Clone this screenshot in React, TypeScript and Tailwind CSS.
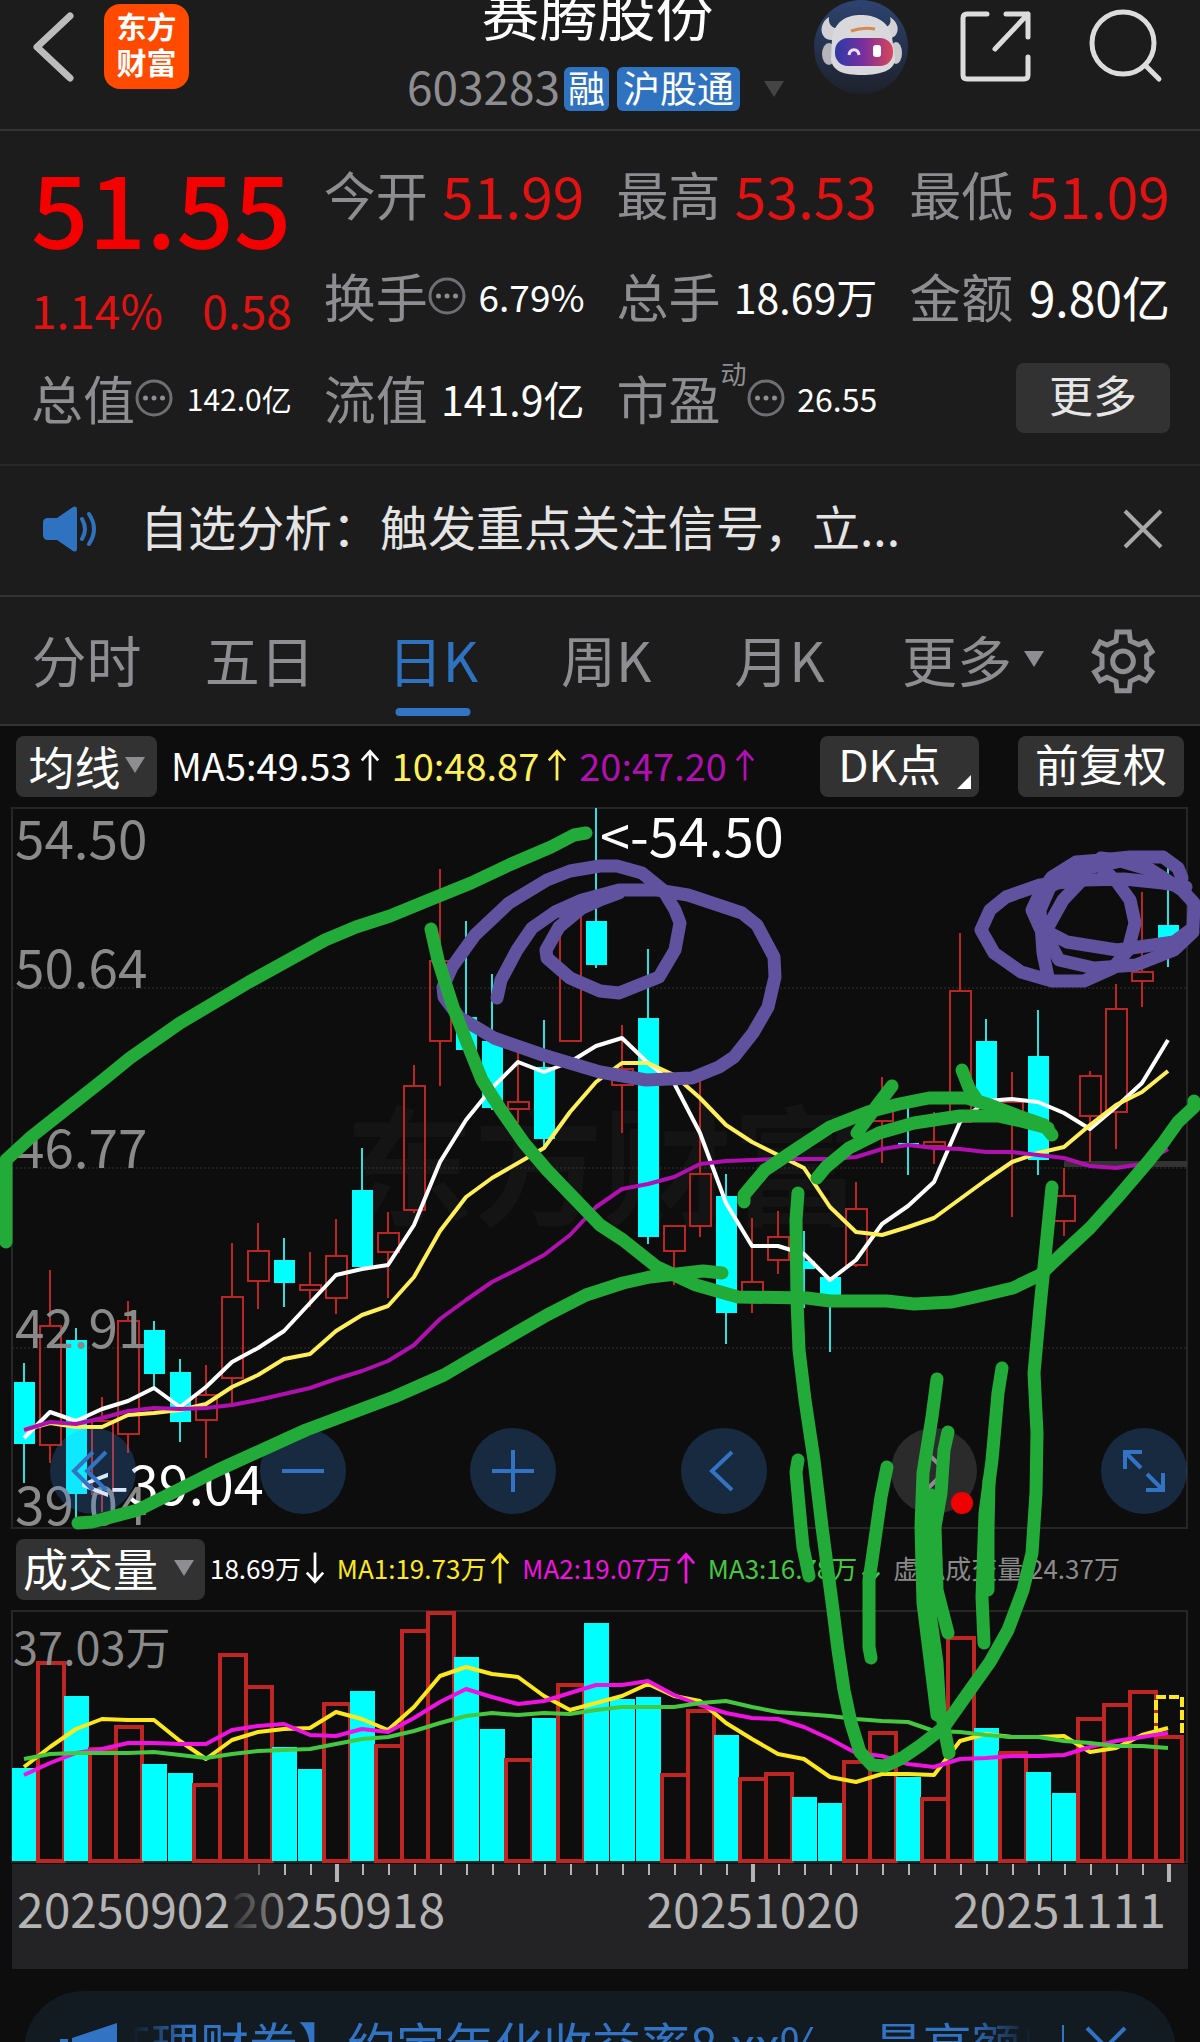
import { useState, type ReactNode } from "react";

// u = up day (hollow red), d = down day (solid cyan); values are chart y positions
type Candle = ["u" | "d", number, number, number, number];

const CANDLES: Candle[] = [
  ["d", 1363, 1382, 1444, 1483],
  ["u", 1270, 1326, 1445, 1463],
  ["d", 1328, 1340, 1494, 1528],
  ["u", 1397, 1421, 1494, 1512],
  ["u", 1301, 1321, 1434, 1453],
  ["d", 1321, 1330, 1374, 1387],
  ["d", 1359, 1372, 1422, 1442],
  ["u", 1365, 1395, 1420, 1458],
  ["u", 1243, 1297, 1378, 1405],
  ["u", 1223, 1251, 1281, 1309],
  ["d", 1238, 1260, 1283, 1307],
  ["u", 1252, 1285, 1290, 1307],
  ["u", 1219, 1256, 1298, 1314],
  ["d", 1148, 1190, 1267, 1267],
  ["u", 1212, 1233, 1252, 1298],
  ["u", 1065, 1086, 1210, 1213],
  ["u", 869, 961, 1041, 1086],
  ["d", 921, 1017, 1050, 1050],
  ["d", 974, 1041, 1108, 1110],
  ["u", 1053, 1102, 1109, 1123],
  ["d", 1020, 1067, 1139, 1147],
  ["u", 917, 917, 1041, 1041],
  ["d", 808, 921, 965, 968],
  ["u", 1025, 1069, 1085, 1133],
  ["d", 949, 1018, 1237, 1244],
  ["u", 1226, 1226, 1251, 1285],
  ["u", 1080, 1174, 1226, 1237],
  ["d", 1174, 1196, 1313, 1344],
  ["u", 1218, 1282, 1293, 1313],
  ["u", 1211, 1237, 1260, 1274],
  ["d", 1231, 1261, 1269, 1308],
  ["d", 1277, 1277, 1300, 1352],
  ["u", 1182, 1209, 1265, 1267],
  ["u", 1077, 1110, 1121, 1163],
  ["d", 1108, 1143, 1147, 1175],
  ["u", 1112, 1142, 1146, 1164],
  ["u", 933, 991, 1122, 1122],
  ["d", 1019, 1041, 1102, 1102],
  ["u", 1072, 1102, 1122, 1217],
  ["d", 1010, 1056, 1160, 1175],
  ["u", 1168, 1196, 1221, 1236],
  ["u", 1071, 1076, 1116, 1162],
  ["u", 984, 1009, 1112, 1149],
  ["u", 892, 972, 981, 1007],
  ["d", 865, 925, 938, 967],
];

const MA5 = [1438, 1412, 1421, 1409, 1401, 1388, 1407, 1387, 1362, 1348, 1331, 1303, 1275, 1269, 1265, 1225, 1162, 1120, 1088, 1062, 1072, 1062, 1046, 1038, 1063, 1083, 1133, 1203, 1246, 1246, 1254, 1280, 1260, 1224, 1206, 1182, 1122, 1101, 1099, 1102, 1113, 1129, 1107, 1083, 1040];
const MA10 = [1430, 1423, 1427, 1427, 1415, 1413, 1410, 1404, 1387, 1375, 1359, 1354, 1331, 1315, 1306, 1277, 1231, 1197, 1178, 1163, 1148, 1112, 1082, 1063, 1063, 1075, 1098, 1125, 1142, 1155, 1168, 1207, 1232, 1235, 1227, 1218, 1199, 1180, 1162, 1153, 1147, 1125, 1105, 1092, 1071];
const MA20 = [1430, 1422, 1424, 1418, 1411, 1408, 1409, 1408, 1405, 1400, 1394, 1388, 1379, 1371, 1361, 1345, 1319, 1300, 1282, 1269, 1255, 1235, 1207, 1189, 1184, 1177, 1164, 1161, 1160, 1159, 1159, 1159, 1157, 1149, 1145, 1148, 1149, 1152, 1152, 1155, 1158, 1166, 1168, 1164, 1149];

const VOLUME_TOPS = [1768, 1662, 1696, 1748, 1726, 1764, 1773, 1784, 1654, 1686, 1747, 1769, 1703, 1691, 1745, 1630, 1612, 1657, 1729, 1759, 1718, 1684, 1623, 1699, 1697, 1774, 1710, 1735, 1778, 1773, 1797, 1803, 1761, 1732, 1777, 1798, 1637, 1728, 1752, 1772, 1793, 1718, 1704, 1691, 1736];
const VOLUME_DOWN = [0, 2, 5, 6, 10, 11, 13, 17, 18, 20, 22, 23, 24, 27, 30, 31, 34, 37, 39, 40];
const VMA1 = [1767, 1747, 1729, 1719, 1720, 1720, 1741, 1759, 1740, 1732, 1729, 1728, 1712, 1719, 1730, 1707, 1676, 1667, 1674, 1677, 1696, 1710, 1703, 1696, 1684, 1696, 1701, 1723, 1739, 1754, 1759, 1777, 1782, 1774, 1774, 1775, 1741, 1734, 1737, 1737, 1736, 1752, 1748, 1735, 1728];
const VMA2 = [1775, 1763, 1753, 1749, 1743, 1743, 1744, 1744, 1730, 1726, 1724, 1735, 1736, 1729, 1732, 1718, 1702, 1689, 1697, 1704, 1701, 1693, 1685, 1685, 1681, 1695, 1705, 1713, 1718, 1719, 1727, 1739, 1753, 1756, 1764, 1767, 1759, 1758, 1756, 1756, 1755, 1747, 1741, 1737, 1733];
const VMA3 = [1759, 1754, 1753, 1753, 1753, 1752, 1755, 1758, 1754, 1751, 1750, 1749, 1744, 1739, 1737, 1731, 1723, 1716, 1713, 1715, 1713, 1714, 1710, 1707, 1707, 1707, 1703, 1701, 1707, 1712, 1714, 1716, 1719, 1721, 1722, 1731, 1732, 1735, 1737, 1737, 1741, 1743, 1746, 1746, 1748];

const PRICE_LABELS = [
  { text: "54.50", y: 859 },
  { text: "50.64", y: 988 },
  { text: "46.77", y: 1168 },
  { text: "42.91", y: 1348 },
  { text: "39.04", y: 1525 },
];

const GREEN_STROKES = [
  "586,833 574,835 551,847 509,865 471,883 429,900 390,916 356,927 325,940 249,982 180,1023 130,1058 103,1080 31,1137 6,1160 6,1242",
  "431,929 438,960 453,1007 471,1053 482,1080 501,1110 524,1143 547,1170 600,1225 623,1240 657,1267 696,1285 738,1297 807,1298 830,1301 887,1301 914,1304 952,1302 975,1297 1013,1288 1040,1275 1063,1253 1090,1228 1117,1198 1147,1163 1163,1143 1178,1122 1194,1107 1194,1101",
  "78,1523 92,1522 138,1510 218,1470 306,1430 394,1397 444,1375 478,1355 547,1315 586,1295 623,1283 650,1277 703,1271 722,1273",
  "744,1202 744,1195 765,1170 795,1150 830,1127 868,1112 899,1104 929,1098 967,1098 990,1105 1021,1117 1044,1125 1052,1135",
  "817,1178 826,1167 849,1148 879,1133 914,1123 960,1116 998,1116 1021,1121 1048,1128",
  "892,1086 876,1107 857,1133",
  "962,1070 969,1088 977,1100",
  "798,1193 796,1220 797,1300 799,1350 805,1400 814,1460 822,1527 833,1610 838,1650 844,1690 851,1723 860,1752 872,1765 885,1766 902,1758 921,1745 944,1727 975,1683 990,1662 1008,1630 1023,1590 1032,1553 1036,1493 1037,1433 1034,1373 1040,1307 1046,1247 1052,1187",
  "798,1460 796,1472 801,1527 803,1547 809,1576",
  "887,1467 881,1497 872,1560 869,1580 869,1647 871,1658",
  "937,1379 932,1417 923,1473 921,1527 923,1603 937,1715 942,1717 949,1753",
  "948,1432 944,1450 941,1493 935,1527 937,1590 948,1633",
  "931,1495 929,1550 931,1620 937,1663 940,1715",
  "1002,1368 998,1393 992,1460 985,1513 982,1597 984,1643",
  "989,1480 988,1530 988,1590",
];

const PURPLE_STROKES = [
  "497,998 501,980 517,950 532,928 555,912 582,900 619,890 657,890 688,895 742,913 757,925 774,957 775,977 768,1007 753,1033 734,1057 719,1067 692,1078 646,1080 600,1072 543,1055 494,1038 459,1017 444,997 443,987 452,967 475,935 509,903 547,880 570,871 600,866 617,866 642,873 663,890 675,910 680,923 675,950 659,977 644,983 619,993 600,991 570,978 547,958 546,950 559,927 582,908 600,900 619,893",
  "1182,878 1178,868 1163,857 1130,857 1101,860 1076,862 1052,877 1040,893 1032,910 1040,928 1067,942 1117,950 1174,942 1193,928 1194,903 1182,890 1151,870 1117,860 1101,858",
  "1186,887 1163,883 1124,879 1084,880 1040,885 1006,897 990,910 981,930 994,953 1021,972 1052,981 1084,981 1113,968 1128,950 1135,923 1130,900 1117,882 1101,867",
  "1082,880 1063,900 1048,927 1050,943 1059,960 1094,968 1136,965 1174,950 1193,932",
  "1048,977 1043,953 1040,910 1050,887 1078,870 1117,862",
];

const xAt = (i: number) => 24 + i * 26;
const toPoints = (ys: number[]) => ys.map((y, i) => `${xAt(i)},${y}`).join(" ");

function Arrow({ up = true }: { up?: boolean }) {
  return (
    <svg viewBox="0 0 22 36" className={`h-9 w-5 shrink-0 ${up ? "" : "rotate-180"}`} fill="none" stroke="currentColor" strokeWidth="3">
      <path d="M11 35V3M2 13L11 3l9 10" />
    </svg>
  );
}

function Caret({ className = "" }: { className?: string }) {
  return (
    <svg viewBox="0 0 20 16" className={`h-4 w-5 shrink-0 ${className}`} fill="currentColor">
      <path d="M0 0h20L10 16z" />
    </svg>
  );
}

function InfoDots() {
  return (
    <svg viewBox="0 0 38 38" className="size-[38px] shrink-0" fill="none" stroke="#6f6f73" strokeWidth="3">
      <circle cx="19" cy="19" r="17" />
      <g fill="#8e8e92" stroke="none">
        <circle cx="10.500" cy="19" r="2.500" />
        <circle cx="19" cy="19" r="2.500" />
        <circle cx="27.500" cy="19" r="2.500" />
      </g>
    </svg>
  );
}

function Stat({ label, value, size, info, tone = "text-white", sup }: {
  label: string;
  value: string;
  size: string;
  info?: boolean;
  tone?: string;
  sup?: string;
}) {
  return (
    <div className="flex items-center justify-between whitespace-nowrap pb-1">
      <span className="flex items-center text-[52px] leading-none text-[#8e8e92]">
        {label}
        {sup && <sup className="mb-6 text-[26px] leading-none">{sup}</sup>}
        {info && <InfoDots />}
      </span>
      <span className={`${size} ${tone} leading-none`}>{value}</span>
    </div>
  );
}

function RobotAvatar() {
  return (
    <svg viewBox="0 0 94 94" className="size-[94px]">
      <defs>
        <linearGradient id="sky" x1="0" y1="0" x2="0" y2="1">
          <stop offset="0" stopColor="#2d4370" />
          <stop offset="1" stopColor="#1d212b" />
        </linearGradient>
        <linearGradient id="visor">
          <stop offset="0" stopColor="#2b3aa8" />
          <stop offset="0.500" stopColor="#7a2f9c" />
          <stop offset="1" stopColor="#d8455c" />
        </linearGradient>
      </defs>
      <circle cx="47" cy="47" r="47" fill="url(#sky)" />
      <path d="M15 17c-8 5-10 15-4 21q6 4 12 0l2-10c-6 1-11-3-10-11zM76 17c8 5 10 13 5 19q-5 4-11 1l-2-10c6 1 10-3 8-10z" fill="#d2d1d6" />
      <ellipse cx="15" cy="54" rx="7" ry="11" fill="#b5b4ba" />
      <ellipse cx="82" cy="53" rx="6" ry="11" fill="#c9c8cd" />
      <path d="M18 38C21 20 34 15 47 15s27 5 31 22l3 22c0 11-14 16-33 16S19 71 17 60z" fill="#d9d8dd" />
      <rect x="21" y="38" width="58" height="28" rx="13" fill="url(#visor)" />
      <path d="M35 55c1-7 9-7 10 0" fill="none" stroke="#e8e4ff" strokeWidth="3" />
      <rect x="59" y="45" width="8" height="12" rx="3" fill="#fff" />
      <path d="M37 31q12-4 24-2" fill="none" stroke="#d58a52" strokeWidth="3" />
    </svg>
  );
}

function Header() {
  return (
    <header className="flex h-[131px] items-start justify-between border-b-2 border-[#333] pl-8 pr-[37px]">
      <div className="flex w-[360px] gap-[26px]">
        <button aria-label="返回" className="mt-3 self-start">
          <svg viewBox="0 0 46 70" className="h-[70px] w-[46px]" fill="none" stroke="#bcbcbc" strokeWidth="7" strokeLinecap="round" strokeLinejoin="round">
            <path d="M38 4L5 35l33 31" />
          </svg>
        </button>
        <a href="#home" className="mt-1 flex size-[85px] flex-col items-center justify-center rounded-2xl bg-[#ff4a00] pb-2 text-[30px] font-bold leading-9 text-white">
          <span>东方</span>
          <span>财富</span>
        </a>
      </div>

      <div className="flex flex-col items-center whitespace-nowrap">
        <h1 className="-mt-5 text-[58px] leading-[62px] text-white">赛腾股份</h1>
        <div className="mt-5 flex items-center gap-2">
          <span className="pb-2 text-[46px] leading-[46px] text-[#8e8e92]">603283</span>
          <span className="-ml-1 rounded-md bg-[#2f72c0] px-1 pb-1 text-[37px] leading-10 text-white">融</span>
          <span className="rounded-md bg-[#2f72c0] px-[6px] pb-1 text-[37px] leading-10 text-white">沪股通</span>
          <Caret className="ml-3 w-7 text-[#444]" />
        </div>
      </div>

      <div className="flex w-[360px] items-start justify-end">
        <button aria-label="智能助手" className="mr-[51px]">
          <RobotAvatar />
        </button>
        <button aria-label="分享" className="mr-[54px] mt-[10px]">
          <svg viewBox="0 0 74 74" className="size-[74px]" fill="none" stroke="#dcdcdc" strokeWidth="5" strokeLinecap="round" strokeLinejoin="round">
            <path d="M28 4H8Q4 4 4 8V65Q4 69 8 69H65Q69 69 69 65V47M47 4H69V27M69 4L36 39" />
          </svg>
        </button>
        <button aria-label="搜索" className="mt-2">
          <svg viewBox="0 0 76 76" className="size-[76px]" fill="none" stroke="#dcdcdc" strokeWidth="5" strokeLinecap="round">
            <circle cx="36" cy="35" r="31" />
            <path d="M58 57l14 14" />
          </svg>
        </button>
      </div>
    </header>
  );
}

function QuotePanel() {
  const red = "text-[#e01212]";
  return (
    <section className="grid grid-cols-4 grid-rows-[102px_102px_102px] gap-x-8 border-b-2 border-[#282828] pb-[13px] pl-[31px] pr-[30px] pt-[14px]">
      <div className="row-span-2 flex flex-col">
        <strong className="mt-2 text-[101px] font-medium leading-[104px] text-[#f30000]">51.55</strong>
        <div className={`mt-7 flex justify-between text-[46px] leading-[48px] ${red}`}>
          <span>1.14%</span>
          <span>0.58</span>
        </div>
      </div>
      <Stat label="今开" value="51.99" size="text-[57px]" tone={red} />
      <Stat label="最高" value="53.53" size="text-[57px]" tone={red} />
      <Stat label="最低" value="51.09" size="text-[57px]" tone={red} />
      <Stat label="换手" value="6.79%" size="text-[37px]" info />
      <Stat label="总手" value="18.69万" size="text-[41px]" />
      <Stat label="金额" value="9.80亿" size="text-[48px]" />
      <Stat label="总值" value="142.0亿" size="text-[30px]" info />
      <Stat label="流值" value="141.9亿" size="text-[41px]" />
      <Stat label="市盈" value="26.55" size="text-[32px]" info sup="动" />
      <div className="flex items-center justify-end pb-1">
        <button className="h-[70px] w-[154px] rounded-lg bg-[#323232] pb-2 text-[44px] leading-none text-[#e6e6e6]">更多</button>
      </div>
    </section>
  );
}

function Notice() {
  return (
    <section className="flex h-[131px] items-center border-b-2 border-[#333] pb-1 pl-[42px] pr-[37px]">
      <svg viewBox="0 0 58 46" className="h-[46px] w-[58px] shrink-0" fill="#2f72c0">
        <path d="M6 12h9L31 1q4-2 4 3v38q0 5-4 3L15 34H6q-5 0-5-5V17q0-5 5-5z" />
        <path d="M40 13q6 10 0 20M47 8q10 15 0 30" fill="none" stroke="#2f72c0" strokeWidth="4" strokeLinecap="round" />
      </svg>
      <p className="ml-10 flex-1 truncate pb-2 text-[48px] leading-[64px] text-[#e4e4e4]">自选分析：触发重点关注信号，立...</p>
      <button aria-label="关闭">
        <svg viewBox="0 0 40 40" className="size-10" fill="none" stroke="#a8a8a8" strokeWidth="4">
          <path d="M2 2l36 36M38 2L2 38" />
        </svg>
      </button>
    </section>
  );
}

const TABS = ["分时", "五日", "日K", "周K", "月K"];

function PeriodTabs() {
  const [active, setActive] = useState("日K");
  return (
    <nav className="flex h-[129px] items-stretch border-b-2 border-[#333] pr-[34px] text-[55px] leading-none text-[#8e8e92]">
      {TABS.map((tab) => (
        <button
          key={tab}
          onClick={() => setActive(tab)}
          className={`relative flex-1 pb-1 ${active === tab ? "text-[#2f72c0]" : ""}`}
        >
          {tab}
          {active === tab && <span className="absolute bottom-2 left-1/2 h-2 w-[75px] -translate-x-1/2 rounded-full bg-[#3273c4]" />}
        </button>
      ))}
      <button className="flex w-[214px] items-center justify-center gap-3 pb-1">
        更多
        <Caret />
      </button>
      <button aria-label="设置" className="flex w-[86px] items-center justify-center">
        <svg viewBox="88 48 204 204" className="size-[68px]" fill="none" stroke="#8e8e92" strokeWidth="15">
          <path d="M172 63H209L212 90 238 101 259 92 277 122 261 134V169L277 183 259 209 238 199 212 211 209 239H172L169 211 142 199 121 209 105 183 127 169V134L105 122 121 93 142 102 169 90z" />
          <circle cx="190" cy="151" r="31" />
        </svg>
      </button>
    </nav>
  );
}

function IndicatorRow() {
  return (
    <div className="flex items-center justify-between px-4 pb-[3px] pt-[10px] text-[38px] leading-none">
      <div className="flex items-center">
        <button className="flex h-[61px] w-[141px] items-center justify-center gap-1 rounded-lg bg-[#323232] pb-1 text-[46px] text-white">
          均线
          <Caret className="text-[#8e8e92]" />
        </button>
        <div className="ml-[14px] flex items-center gap-3 pb-1">
          <span className="flex items-center gap-2 text-white">MA5:49.53<Arrow /></span>
          <span className="flex items-center gap-2 text-[#fff05a]">10:48.87<Arrow /></span>
          <span className="flex items-center gap-2 text-[#b010b0]">20:47.20<Arrow /></span>
        </div>
      </div>
      <div className="flex gap-[39px] text-[44px] text-white">
        <button className="relative h-[61px] w-[159px] rounded-lg bg-[#323232] pb-2 pr-5">
          DK点
          <svg viewBox="0 0 14 14" className="absolute bottom-2 right-2 size-[14px]" fill="#fff">
            <path d="M14 0v14H0z" />
          </svg>
        </button>
        <button className="h-[61px] w-[166px] rounded-lg bg-[#323232] pb-2">前复权</button>
      </div>
    </div>
  );
}

function PriceChart() {
  return (
    <svg viewBox="0 800 1200 736" className="block w-full">
      <text x="345" y="1216" fontSize="129" fontWeight="700" fill="#141414">东方财富</text>
      <rect x="12" y="808" width="1175" height="720" fill="none" stroke="#262626" strokeWidth="2" />
      {[988, 1168, 1348].map((y) => (
        <path key={y} d={`M12 ${y}H1187`} stroke="#333" strokeWidth="1" strokeDasharray="2 2" />
      ))}
      <path d="M1064 1164H1187" stroke="#333" strokeWidth="6" />
      {CANDLES.map(([kind, high, top, bottom, low], i) => {
        const x = xAt(i);
        return kind === "d" ? (
          <g key={i}>
            <path d={`M${x} ${high}V${low}`} stroke="#2fdede" strokeWidth="2" />
            <rect x={x - 10} y={top} width="21" height={bottom - top} fill="#00ffff" />
          </g>
        ) : (
          <g key={i} fill="none" stroke="#b92624" strokeWidth="2">
            <path d={`M${x} ${high}V${top}M${x} ${bottom}V${low}`} />
            <rect x={x - 10} y={top} width="21" height={bottom - top} />
          </g>
        );
      })}
      <g fill="none" strokeWidth="4" strokeLinejoin="round">
        <polyline points={toPoints(MA5)} stroke="#fff" />
        <polyline points={toPoints(MA10)} stroke="#fff05a" />
        <polyline points={toPoints(MA20)} stroke="#b010b0" />
      </g>
      <g fontSize="53" fill="#8a8a8a">
        {PRICE_LABELS.map((l) => (
          <text key={l.text} x="15" y={l.y}>{l.text}</text>
        ))}
      </g>
      <g fontSize="54" fill="#fff">
        <text x="600" y="857">&lt;-54.50</text>
        <text x="80" y="1505">&lt;-39.04</text>
      </g>
    </svg>
  );
}

function RoundButton({ label, muted, children }: { label: string; muted?: boolean; children: ReactNode }) {
  return (
    <button
      aria-label={label}
      className={`relative size-[86px] rounded-full ${muted ? "bg-[#ffffff20] text-[#8e8e92]" : "bg-[#4296ff36] text-[#3273c4]"}`}
    >
      <svg viewBox="0 0 86 86" className="size-full" fill="none" stroke="currentColor" strokeWidth="4">
        {children}
      </svg>
      {muted && <span className="absolute bottom-0 right-1 size-[22px] rounded-full bg-[#f00000]" />}
    </button>
  );
}

function ChartControls() {
  return (
    <div className="absolute inset-x-0 bottom-[22px] flex justify-between pl-[50px] pr-[13px]">
      <RoundButton label="最早"><path d="M43 24L24 43l19 19M56 24L37 43l19 19" /></RoundButton>
      <RoundButton label="缩小"><path d="M22 43h42" /></RoundButton>
      <RoundButton label="放大"><path d="M22 43h42M43 22v42" /></RoundButton>
      <RoundButton label="向前"><path d="M51 24L31 43l20 19" /></RoundButton>
      <RoundButton label="向后" muted><path d="M35 24l20 19-20 19" /></RoundButton>
      <RoundButton label="全屏"><path d="M24 41V24h17M24 24l16 16M62 45v17H45M62 62L46 46" /></RoundButton>
    </div>
  );
}

function VolumeRow() {
  return (
    <div className="flex items-center py-[3px] pl-4 pr-[80px] text-[26px] leading-none">
      <button className="flex h-[61px] w-[189px] items-center justify-center gap-4 rounded-lg bg-[#323232] pb-1 pr-1 text-[45px] text-white">
        成交量
        <Caret className="text-[#8e8e92]" />
      </button>
      <div className="ml-[5px] flex flex-1 items-center justify-between whitespace-nowrap pb-1">
        <span className="flex items-center gap-1 text-white">18.69万<Arrow up={false} /></span>
        <span className="flex items-center gap-1 text-[#fde81d]">MA1:19.73万<Arrow /></span>
        <span className="flex items-center gap-1 text-[#f012e0]">MA2:19.07万<Arrow /></span>
        <span className="flex items-center gap-1 text-[#45c840]">MA3:16.78万<Arrow up={false} /></span>
        <span className="text-[#8a8a8a]">虚拟成交量 24.37万</span>
      </div>
    </div>
  );
}

function VolumeChart() {
  return (
    <svg viewBox="0 1603 1200 366" className="block w-full">
      <defs>
        <linearGradient id="fade" gradientUnits="userSpaceOnUse" x1="232" y1="0" x2="300" y2="0">
          <stop offset="0" stopColor="#b4b4b4" stopOpacity="0.100" />
          <stop offset="1" stopColor="#b4b4b4" />
        </linearGradient>
      </defs>
      <rect x="12" y="1611" width="1175" height="251" fill="none" stroke="#262626" strokeWidth="2" />
      {VOLUME_TOPS.map((top, i) => {
        const x = xAt(i);
        return VOLUME_DOWN.includes(i) ? (
          <rect key={i} x={x - 12} y={top} width="25" height={1861 - top} fill="#00ffff" />
        ) : (
          <rect key={i} x={x - 12} y={top + 1} width="26" height={1860 - top} fill="none" stroke="#bf2523" strokeWidth="4" />
        );
      })}
      <path d="M1156 1736V1697H1182V1736" fill="none" stroke="#fde81d" strokeWidth="4" strokeDasharray="10 3" />
      <g fill="none" strokeWidth="4" strokeLinejoin="round">
        <polyline points={toPoints(VMA1)} stroke="#fde81d" />
        <polyline points={toPoints(VMA2)} stroke="#f012e0" />
        <polyline points={toPoints(VMA3)} stroke="#45c840" />
      </g>
      <text x="13" y="1665" fontSize="45" fill="#8a8a8a">37.03万</text>

      <rect x="12" y="1864" width="1176" height="105" fill="#232325" />
      {CANDLES.map((_, i) => {
        if (i < 9) return null;
        const major = i === 12 || i === 28 || i === 44;
        return (
          <path
            key={i}
            d={`M${xAt(i) + 1} 1864V${major ? 1882 : 1875}`}
            stroke={i === 9 ? "#666" : "#b4b4b4"}
            strokeWidth={major ? 4 : 2}
          />
        );
      })}
      <g fontSize="48" fill="#b4b4b4">
        <text x="17" y="1928">20250902</text>
        <text x="232" y="1928" fill="url(#fade)">20250918</text>
        <text x="753" y="1928" textAnchor="middle">20251020</text>
        <text x="1166" y="1928" textAnchor="end">20251111</text>
      </g>
    </svg>
  );
}

function DrawnMarks() {
  return (
    <svg viewBox="0 726 1200 1243" className="pointer-events-none absolute inset-x-0 top-0 w-full" fill="none" strokeWidth="13" strokeLinecap="round" strokeLinejoin="round">
      {PURPLE_STROKES.map((p) => (
        <polyline key={p} points={p} stroke="#60529e" />
      ))}
      {GREEN_STROKES.map((p) => (
        <polyline key={p} points={p} stroke="#22ab38" />
      ))}
    </svg>
  );
}

function PromoBanner() {
  return (
    <aside className="mx-6 mt-[22px] flex h-[120px] items-start rounded-[60px] bg-[#121a22] pl-9 pr-[48px] pt-[22px] text-[#3273c4]">
      <svg viewBox="0 0 58 60" className="mt-2 h-[60px] w-[58px] shrink-0" fill="currentColor">
        <path d="M0 18h8v26H0zM12 17L57 2v54L12 43z" />
      </svg>
      <p className="-ml-4 flex-1 overflow-hidden whitespace-nowrap text-[49px] leading-[60px] [mask-image:linear-gradient(to_right,transparent_30px,#000_85px,#000_92%,transparent_99%)]">
        红理财券】约定年化收益率8.xx%，最高额度
      </p>
      <span className="ml-5 mt-3 h-[60px] w-[2px] bg-[#3273c4]" />
      <button aria-label="关闭广告" className="ml-[20px] mt-3">
        <svg viewBox="0 0 44 44" className="size-11" fill="none" stroke="currentColor" strokeWidth="4">
          <path d="M3 3l38 38M41 3L3 41" />
        </svg>
      </button>
    </aside>
  );
}

export default function App() {
  return (
    <div className="h-screen overflow-hidden bg-[#0d0d0d] font-['Noto_Sans_CJK_SC',sans-serif]">
      <div className="bg-[#1c1c1c]">
        <Header />
        <QuotePanel />
        <Notice />
        <PeriodTabs />
      </div>
      <main className="relative">
        <IndicatorRow />
        <div className="relative">
          <PriceChart />
          <ChartControls />
        </div>
        <VolumeRow />
        <VolumeChart />
        <DrawnMarks />
      </main>
      <PromoBanner />
    </div>
  );
}
